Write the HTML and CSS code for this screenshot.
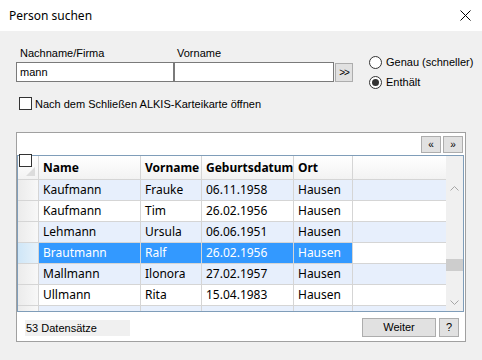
FILE: index.html
```
<!DOCTYPE html>
<html lang="de">
<head>
    <meta charset="UTF-8">
    <title>Person suchen</title>
    <link rel="stylesheet" href="styles.css">
</head>
<body>
    <div class="titlebar">
        <span class="title">Person suchen</span>
        <svg class="close" width="11" height="11" viewBox="0 0 11 11"><path d="M0.5 0.5 L10.5 10.5 M10.5 0.5 L0.5 10.5" stroke="#000" stroke-width="1" fill="none"/></svg>
    </div>

    <div class="main">
        <div class="search">
            <div class="fields">
                <span class="field-label field-label-first">Nachname/Firma</span>
                <span class="field-label">Vorname</span>
                <span></span>
                <input class="field field-first" type="text" value="mann">
                <input class="field field-second" type="text" value="">
                <button class="btn btn-go">&gt;&gt;</button>
            </div>
            <div class="modes">
                <label class="radio"><span class="radio-dot"></span>Genau (schneller)</label>
                <label class="radio"><span class="radio-dot is-checked"></span>Enthält</label>
            </div>
        </div>

        <label class="check"><span class="check-box"></span>Nach dem Schließen ALKIS-Karteikarte öffnen</label>

        <div class="results">
            <div class="pager">
                <button class="btn btn-page">&laquo;</button>
                <button class="btn btn-page">&raquo;</button>
            </div>

            <div class="grid">
                <span class="select-all"></span>
                <div class="grid-rows">
                    <div class="row row-head">
                        <div class="cell corner"><span class="corner-mark"></span></div>
                        <div class="cell">Name</div>
                        <div class="cell">Vorname</div>
                        <div class="cell">Geburtsdatum</div>
                        <div class="cell">Ort</div>
                        <div class="cell filler"></div>
                    </div>
                    <div class="row row-alt">
                        <div class="cell rowhead"></div>
                        <div class="cell">Kaufmann</div>
                        <div class="cell">Frauke</div>
                        <div class="cell">06.11.1958</div>
                        <div class="cell">Hausen</div>
                        <div class="cell filler"></div>
                    </div>
                    <div class="row">
                        <div class="cell rowhead"></div>
                        <div class="cell">Kaufmann</div>
                        <div class="cell">Tim</div>
                        <div class="cell">26.02.1956</div>
                        <div class="cell">Hausen</div>
                        <div class="cell filler"></div>
                    </div>
                    <div class="row row-alt">
                        <div class="cell rowhead"></div>
                        <div class="cell">Lehmann</div>
                        <div class="cell">Ursula</div>
                        <div class="cell">06.06.1951</div>
                        <div class="cell">Hausen</div>
                        <div class="cell filler"></div>
                    </div>
                    <div class="row row-selected">
                        <div class="cell rowhead"></div>
                        <div class="cell">Brautmann</div>
                        <div class="cell">Ralf</div>
                        <div class="cell">26.02.1956</div>
                        <div class="cell">Hausen</div>
                        <div class="cell filler"></div>
                    </div>
                    <div class="row row-alt">
                        <div class="cell rowhead"></div>
                        <div class="cell">Mallmann</div>
                        <div class="cell">Ilonora</div>
                        <div class="cell">27.02.1957</div>
                        <div class="cell">Hausen</div>
                        <div class="cell filler"></div>
                    </div>
                    <div class="row">
                        <div class="cell rowhead"></div>
                        <div class="cell">Ullmann</div>
                        <div class="cell">Rita</div>
                        <div class="cell">15.04.1983</div>
                        <div class="cell">Hausen</div>
                        <div class="cell filler"></div>
                    </div>
                    <!-- nächste Zeile, nur angeschnitten sichtbar -->
                    <div class="row row-alt">
                        <div class="cell rowhead"></div>
                        <div class="cell"></div>
                        <div class="cell"></div>
                        <div class="cell"></div>
                        <div class="cell"></div>
                        <div class="cell filler"></div>
                    </div>
                </div>
                <div class="scrollbar">
                    <div class="scroll-gap"></div>
                    <div class="scroll-btn">
                        <svg width="9" height="5" viewBox="0 0 9 5"><path d="M0.5 4.5 L4.5 0.5 L8.5 4.5" stroke="#a6a6a6" fill="none"/></svg>
                    </div>
                    <div class="scroll-track"><div class="scroll-thumb"></div></div>
                    <div class="scroll-btn">
                        <svg width="9" height="5" viewBox="0 0 9 5"><path d="M0.5 0.5 L4.5 4.5 L8.5 0.5" stroke="#a6a6a6" fill="none"/></svg>
                    </div>
                </div>
            </div>

            <div class="results-footer">
                <span class="count">53 Datensätze</span>
                <button class="btn btn-next">Weiter</button>
                <button class="btn btn-help">?</button>
            </div>
        </div>
    </div>
</body>
</html>
```

FILE: styles.css
```
/**
 * Fenster
 */
* {box-sizing: border-box}
body {
    margin: 0;
    width: 482px;
    height: 360px;
    overflow: hidden;
    background: #f0f0f0;
    font: 11px "Liberation Sans", Arial, sans-serif;
    color: #000;
}
button, input {font: inherit; color: inherit; margin: 0}

.titlebar {
    display: flex;
    align-items: center;
    justify-content: space-between;
    height: 31px;
    padding: 0 11px 0 9px;
    background: #fff;
}
.title {font: 12px "Noto Sans", sans-serif}
.close {display: block}

.main {padding: 14px 0 0 16px}

/**
 * Suchfelder und Suchmodus
 */
.search {
    display: flex;
    align-items: flex-start;
}

.fields {
    display: grid;
    grid-template-columns: 158px 160px 19px;
    align-content: start;
}
.field-label {
    height: 17px;
    line-height: 13px;
    padding: 2px 0 0 3px;
}
.field-label-first {padding-left: 4px}

.field {
    height: 20px;
    border: 1px solid #7a7a7a;
    background: #fff;
    padding: 0 3px;
    outline: none;
}

.btn {
    border: 1px solid #adadad;
    background: #e1e1e1;
    padding: 0;
    line-height: 1;
}
.btn-go {
    height: 19px;
    margin: 1px 0 0 1px;
    font-size: 10px;
    letter-spacing: -1px;
}

.modes {
    margin-left: 16px;
    padding-top: 7px;
}
.radio {
    display: flex;
    align-items: center;
    height: 20px;
}
.radio-dot {
    width: 13px;
    height: 13px;
    margin-right: 4px;
    border: 1px solid #333;
    border-radius: 50%;
    background: #fff;
    display: flex;
    align-items: center;
    justify-content: center;
}
.radio-dot.is-checked::after {
    content: "";
    width: 7px;
    height: 7px;
    border-radius: 50%;
    background: #333;
}

/* die Radiogruppe ist höher als die Felder, daher nur wenig Abstand */
.check {
    display: flex;
    align-items: center;
    margin: 5px 0 0 3px;
    height: 13px;
}
.check-box {
    width: 13px;
    height: 13px;
    margin-right: 3px;
    border: 1px solid #333;
    background: #fff;
}

/**
 * Ergebnisbereich
 */
.results {
    margin-top: 22px;
    width: 450px;
    height: 210px;
    border: 1px solid #a0a0a0;
    background: #fff;
}

.pager {
    display: flex;
    justify-content: flex-end;
    gap: 2px;
    height: 22px;
    padding: 3px 2px 0 0;
}
.btn-page {
    width: 20px;
    height: 17px;
    font-size: 10px;
}

.grid {
    position: relative;
    display: flex;
    width: 447px;
    height: 157px;
    border: 1px solid #7f9db9;
}

/* Kästchen "alle auswählen", liegt über der Ecke */
.select-all {
    position: absolute;
    left: 1px;
    top: -2px;
    width: 13px;
    height: 13px;
    border: 1px solid #333;
    background: #fff;
}

.grid-rows {
    flex: 1;
    overflow: hidden;
    font: 12px "Noto Sans", sans-serif;
}

.row {
    display: grid;
    grid-template-columns: 21px 102px 61px 92px 59px 1fr;
    height: 21px;
    background: #fff;
}
.row-alt {background: #e7effc}

.cell {
    border-right: 1px solid #d5d5d5;
    border-bottom: 1px solid #d5d5d5;
    padding-left: 4px;
    line-height: 20px;
    white-space: nowrap;
    overflow: hidden;
}
.cell.filler {border-right: 0}

.row-head {
    height: 24px;
    font-weight: bold;
    background: linear-gradient(#fff, #f2f2f2);
}
.row-head .cell {line-height: 23px}

.rowhead {background: linear-gradient(to right, #ebebeb, #f8f8f8)}

.corner {position: relative}
.corner-mark {
    position: absolute;
    right: 3px;
    bottom: 3px;
    width: 0;
    height: 0;
    border-left: 9px solid transparent;
    border-bottom: 9px solid #dcdcdc;
}

.row-selected .cell {
    background: #3399ff;
    color: #fff;
}
.row-selected .rowhead {background: linear-gradient(to right, #cfe6f7, #e6f2fb)}
.row-selected .filler {background: #fff}

.scrollbar {
    display: flex;
    flex-direction: column;
    width: 17px;
    background: #f0f0f0;
}
.scroll-gap {height: 24px}
.scroll-btn {
    display: flex;
    align-items: center;
    justify-content: center;
    height: 17px;
}
.scroll-btn svg {display: block}
.scroll-track {flex: 1; padding-top: 62px}
.scroll-thumb {height: 12px; background: #cdcdcd}

.results-footer {
    display: flex;
    align-items: center;
    padding: 6px 6px 0 8px;
}
.count {
    width: 105px;
    height: 16px;
    line-height: 16px;
    padding-left: 1px;
    background: #f0f0f0;
}
.btn-next {
    margin-left: auto;
    width: 74px;
    height: 19px;
}
.btn-help {
    margin-left: 3px;
    width: 20px;
    height: 19px;
}
```
